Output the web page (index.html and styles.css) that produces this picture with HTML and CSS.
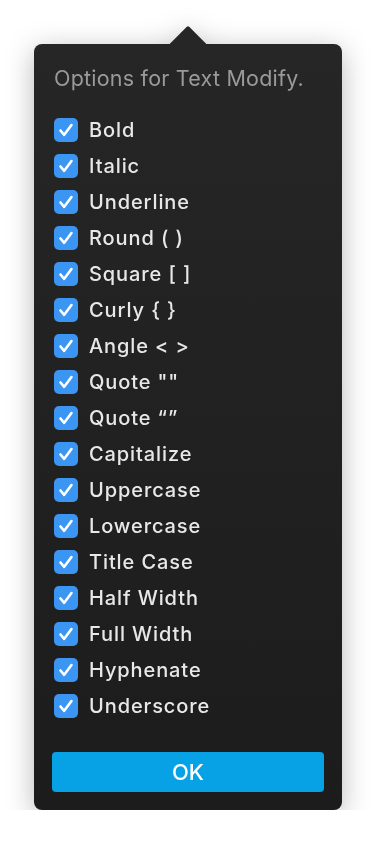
FILE: index.html
```html
<!DOCTYPE html>
<html lang="en">
<head>
  <meta charset="UTF-8">
  <meta name="viewport" content="width=device-width, initial-scale=1">
  <title>Options for Text Modify</title>
  <link rel="stylesheet" href="styles.css">
</head>
<body>
  <div class="popover">
    <div class="panel">
      <p class="title">Options for Text Modify.</p>

      <ul class="options">
        <li class="option"><span class="check"><svg viewBox="0 0 24 24"><path d="M6.5 12.5 L10.2 16.8 L17.5 7"/></svg></span>Bold</li>
        <li class="option"><span class="check"><svg viewBox="0 0 24 24"><path d="M6.5 12.5 L10.2 16.8 L17.5 7"/></svg></span>Italic</li>
        <li class="option"><span class="check"><svg viewBox="0 0 24 24"><path d="M6.5 12.5 L10.2 16.8 L17.5 7"/></svg></span>Underline</li>
        <li class="option"><span class="check"><svg viewBox="0 0 24 24"><path d="M6.5 12.5 L10.2 16.8 L17.5 7"/></svg></span>Round ( )</li>
        <li class="option"><span class="check"><svg viewBox="0 0 24 24"><path d="M6.5 12.5 L10.2 16.8 L17.5 7"/></svg></span>Square [ ]</li>
        <li class="option"><span class="check"><svg viewBox="0 0 24 24"><path d="M6.5 12.5 L10.2 16.8 L17.5 7"/></svg></span>Curly { }</li>
        <li class="option"><span class="check"><svg viewBox="0 0 24 24"><path d="M6.5 12.5 L10.2 16.8 L17.5 7"/></svg></span>Angle &lt; &gt;</li>
        <li class="option"><span class="check"><svg viewBox="0 0 24 24"><path d="M6.5 12.5 L10.2 16.8 L17.5 7"/></svg></span>Quote ""</li>
        <li class="option"><span class="check"><svg viewBox="0 0 24 24"><path d="M6.5 12.5 L10.2 16.8 L17.5 7"/></svg></span>Quote “”</li>
        <li class="option"><span class="check"><svg viewBox="0 0 24 24"><path d="M6.5 12.5 L10.2 16.8 L17.5 7"/></svg></span>Capitalize</li>
        <li class="option"><span class="check"><svg viewBox="0 0 24 24"><path d="M6.5 12.5 L10.2 16.8 L17.5 7"/></svg></span>Uppercase</li>
        <li class="option"><span class="check"><svg viewBox="0 0 24 24"><path d="M6.5 12.5 L10.2 16.8 L17.5 7"/></svg></span>Lowercase</li>
        <li class="option"><span class="check"><svg viewBox="0 0 24 24"><path d="M6.5 12.5 L10.2 16.8 L17.5 7"/></svg></span>Title Case</li>
        <li class="option"><span class="check"><svg viewBox="0 0 24 24"><path d="M6.5 12.5 L10.2 16.8 L17.5 7"/></svg></span>Half Width</li>
        <li class="option"><span class="check"><svg viewBox="0 0 24 24"><path d="M6.5 12.5 L10.2 16.8 L17.5 7"/></svg></span>Full Width</li>
        <li class="option"><span class="check"><svg viewBox="0 0 24 24"><path d="M6.5 12.5 L10.2 16.8 L17.5 7"/></svg></span>Hyphenate</li>
        <li class="option"><span class="check"><svg viewBox="0 0 24 24"><path d="M6.5 12.5 L10.2 16.8 L17.5 7"/></svg></span>Underscore</li>
      </ul>

      <button class="ok-button">OK</button>
    </div>
  </div>
</body>
</html>
```

FILE: styles.css
```css
body {
  margin: 0;
  padding: 44px 34px 0 34px;
  background: #fff;
  font-family: Inter, "Noto Sans", sans-serif;
}
.popover {
  position: relative;
  width: 308px;
  filter: drop-shadow(0 6px 14px rgba(0,0,0,0.28));
}
/* the little pointer above the panel */
.popover::before {
  content: "";
  position: absolute;
  top: -13px;
  left: 141px;
  width: 26px;
  height: 26px;
  background: #262626;
  transform: rotate(45deg);
  border-radius: 2px 0 0 0;
}
.panel {
  position: relative;
  background: linear-gradient(#262626, #1c1c1c);
  border-radius: 8px;
  padding: 22px 18px 18px 20px;
}
.title {
  margin: 0 0 22px 0;
  font-size: 21.5px;
  line-height: 24px;
  letter-spacing: 0.22px;
  color: #9a9a9a;
}
.options {
  list-style: none;
  margin: 0;
  padding: 0;
}
.option {
  display: flex;
  align-items: center;
  height: 36px;
  font-size: 20px;
  font-weight: 500;
  letter-spacing: 0.9px;
  color: #e8e8e8;
}
.check {
  display: flex;
  width: 24px;
  height: 24px;
  margin-right: 11px;
  border-radius: 5px;
  background: #3b95f3;
}
.check svg {
  width: 24px;
  height: 24px;
  fill: none;
  stroke: #fff;
  stroke-width: 2.6;
  stroke-linecap: round;
  stroke-linejoin: round;
}
.ok-button {
  display: block;
  width: 272px;
  height: 40px;
  margin: 28px 0 0 -2px;
  border: none;
  border-radius: 4px;
  background: #07a2e5;
  color: #fff;
  font-family: inherit;
  font-size: 22px;
  font-weight: 500;
  padding: 0;
}
```
